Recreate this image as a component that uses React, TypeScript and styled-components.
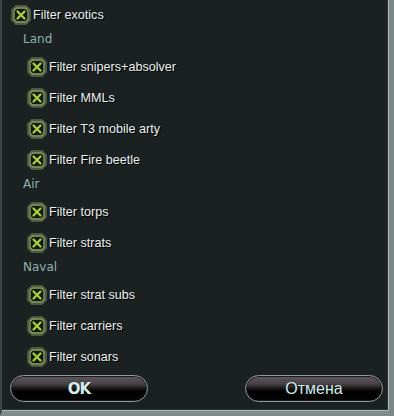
import React from "react";
import styled, { createGlobalStyle } from "styled-components";

const Global = createGlobalStyle`
  html, body { margin: 0; padding: 0; background: #1a2120; }
  #root { width: 394px; height: 416px; }
`;

const Panel = styled.div`
  position: relative;
  box-sizing: border-box;
  width: 394px;
  height: 416px;
  background: #1a2120;
  border-left: 2px solid #3c4644;
  border-right: 5px solid #7a8784;
  border-bottom: 5px solid #7e8b88;
  box-shadow: inset -1px -1px 0 #a9bdb7, inset -2px -2px 0 #2a3331;
  display: flex;
  flex-direction: column;
  font-family: "Liberation Sans", Arial, sans-serif;
  overflow: hidden;
  &::before {
    content: "";
    position: absolute;
    left: -2px;
    bottom: -5px;
    width: 0;
    height: 0;
    border-left: 8px solid #aab9b5;
    border-top: 8px solid transparent;
  }
  &::after {
    content: "";
    position: absolute;
    right: -5px;
    bottom: -5px;
    width: 0;
    height: 0;
    border-right: 12px solid #9fb2ad;
    border-top: 12px solid transparent;
  }
`;

const List = styled.div`
  display: flex;
  flex-direction: column;
  padding-left: 9px;
`;

const Row = styled.div<{ $indent?: boolean; $first?: boolean }>`
  display: flex;
  align-items: center;
  gap: 2px;
  height: ${(p) => (p.$first ? 30 : 31)}px;
  padding-left: ${(p) => (p.$indent ? 16 : 0)}px;
`;

const Label = styled.span`
  color: #ecefee;
  font-size: 12.6px;
  text-shadow: 1px 1px 0 #000;
`;

const Header = styled.div`
  height: 21px;
  box-sizing: border-box;
  padding-left: 12px;
  padding-top: 2px;
  line-height: 15px;
  color: #8fb1aa;
  font-family: "DejaVu Sans", sans-serif;
  font-size: 12px;
`;

const Box = styled.span`
  display: inline-flex;
  width: 20px;
  height: 20px;
`;

const CheckIcon = () => (
  <Box>
    <svg width="20" height="20" viewBox="0 0 20 20">
      <path
        d="M5 1 H15 L19 5 V15 L15 19 H5 L1 15 V5 Z"
        fill="#2b3222"
        stroke="#5f6a4a"
        strokeWidth="1.5"
      />
      <path
        d="M5.5 3 H14.5 L17 5.5 V14.5 L14.5 17 H5.5 L3 14.5 V5.5 Z"
        fill="#141a10"
        stroke="#93a468"
        strokeWidth="1.3"
      />
      <path
        d="M6.5 6.5 L13.5 13.5 M13.5 6.5 L6.5 13.5"
        stroke="#a7d23a"
        strokeWidth="2.2"
        strokeLinecap="round"
      />
    </svg>
  </Box>
);

const Buttons = styled.div`
  display: flex;
  justify-content: space-between;
  padding: 3px 6px 0 8px;
`;

const Btn = styled.button<{ $bold?: boolean }>`
  width: 138px;
  height: 27px;
  border-radius: 14px;
  border: 1px solid #8e9a99;
  background: linear-gradient(
    to bottom,
    #5e585b 0%,
    #4a4447 30%,
    #1a1718 50%,
    #000 62%,
    #050505 100%
  );
  box-shadow: inset 0 0 0 1px #1c1a1b;
  color: #d4ecec;
  font-family: ${(p) =>
    p.$bold ? `"DejaVu Sans", sans-serif` : `"Liberation Sans", Arial, sans-serif`};
  font-weight: ${(p) => (p.$bold ? 700 : 400)};
  font-size: ${(p) => (p.$bold ? 15 : 16)}px;
  letter-spacing: ${(p) => (p.$bold ? "-1px" : "0")};
  padding: 0;
  text-shadow: 0 1px 0 #000;
`;

type Item = { kind: "item"; label: string; indent?: boolean } | { kind: "header"; label: string };

const items: Item[] = [
  { kind: "item", label: "Filter exotics" },
  { kind: "header", label: "Land" },
  { kind: "item", label: "Filter snipers+absolver", indent: true },
  { kind: "item", label: "Filter MMLs", indent: true },
  { kind: "item", label: "Filter T3 mobile arty", indent: true },
  { kind: "item", label: "Filter Fire beetle", indent: true },
  { kind: "header", label: "Air" },
  { kind: "item", label: "Filter torps", indent: true },
  { kind: "item", label: "Filter strats", indent: true },
  { kind: "header", label: "Naval" },
  { kind: "item", label: "Filter strat subs", indent: true },
  { kind: "item", label: "Filter carriers", indent: true },
  { kind: "item", label: "Filter sonars", indent: true },
];

export default function App() {
  return (
    <>
      <Global />
      <Panel>
        <List>
          {items.map((it, i) =>
            it.kind === "header" ? (
              <Header key={i}>{it.label}</Header>
            ) : (
              <Row key={i} $indent={it.indent} $first={i === 0}>
                <CheckIcon />
                <Label>{it.label}</Label>
              </Row>
            )
          )}
        </List>
        <Buttons>
          <Btn $bold>OK</Btn>
          <Btn>Отмена</Btn>
        </Buttons>
      </Panel>
    </>
  );
}
